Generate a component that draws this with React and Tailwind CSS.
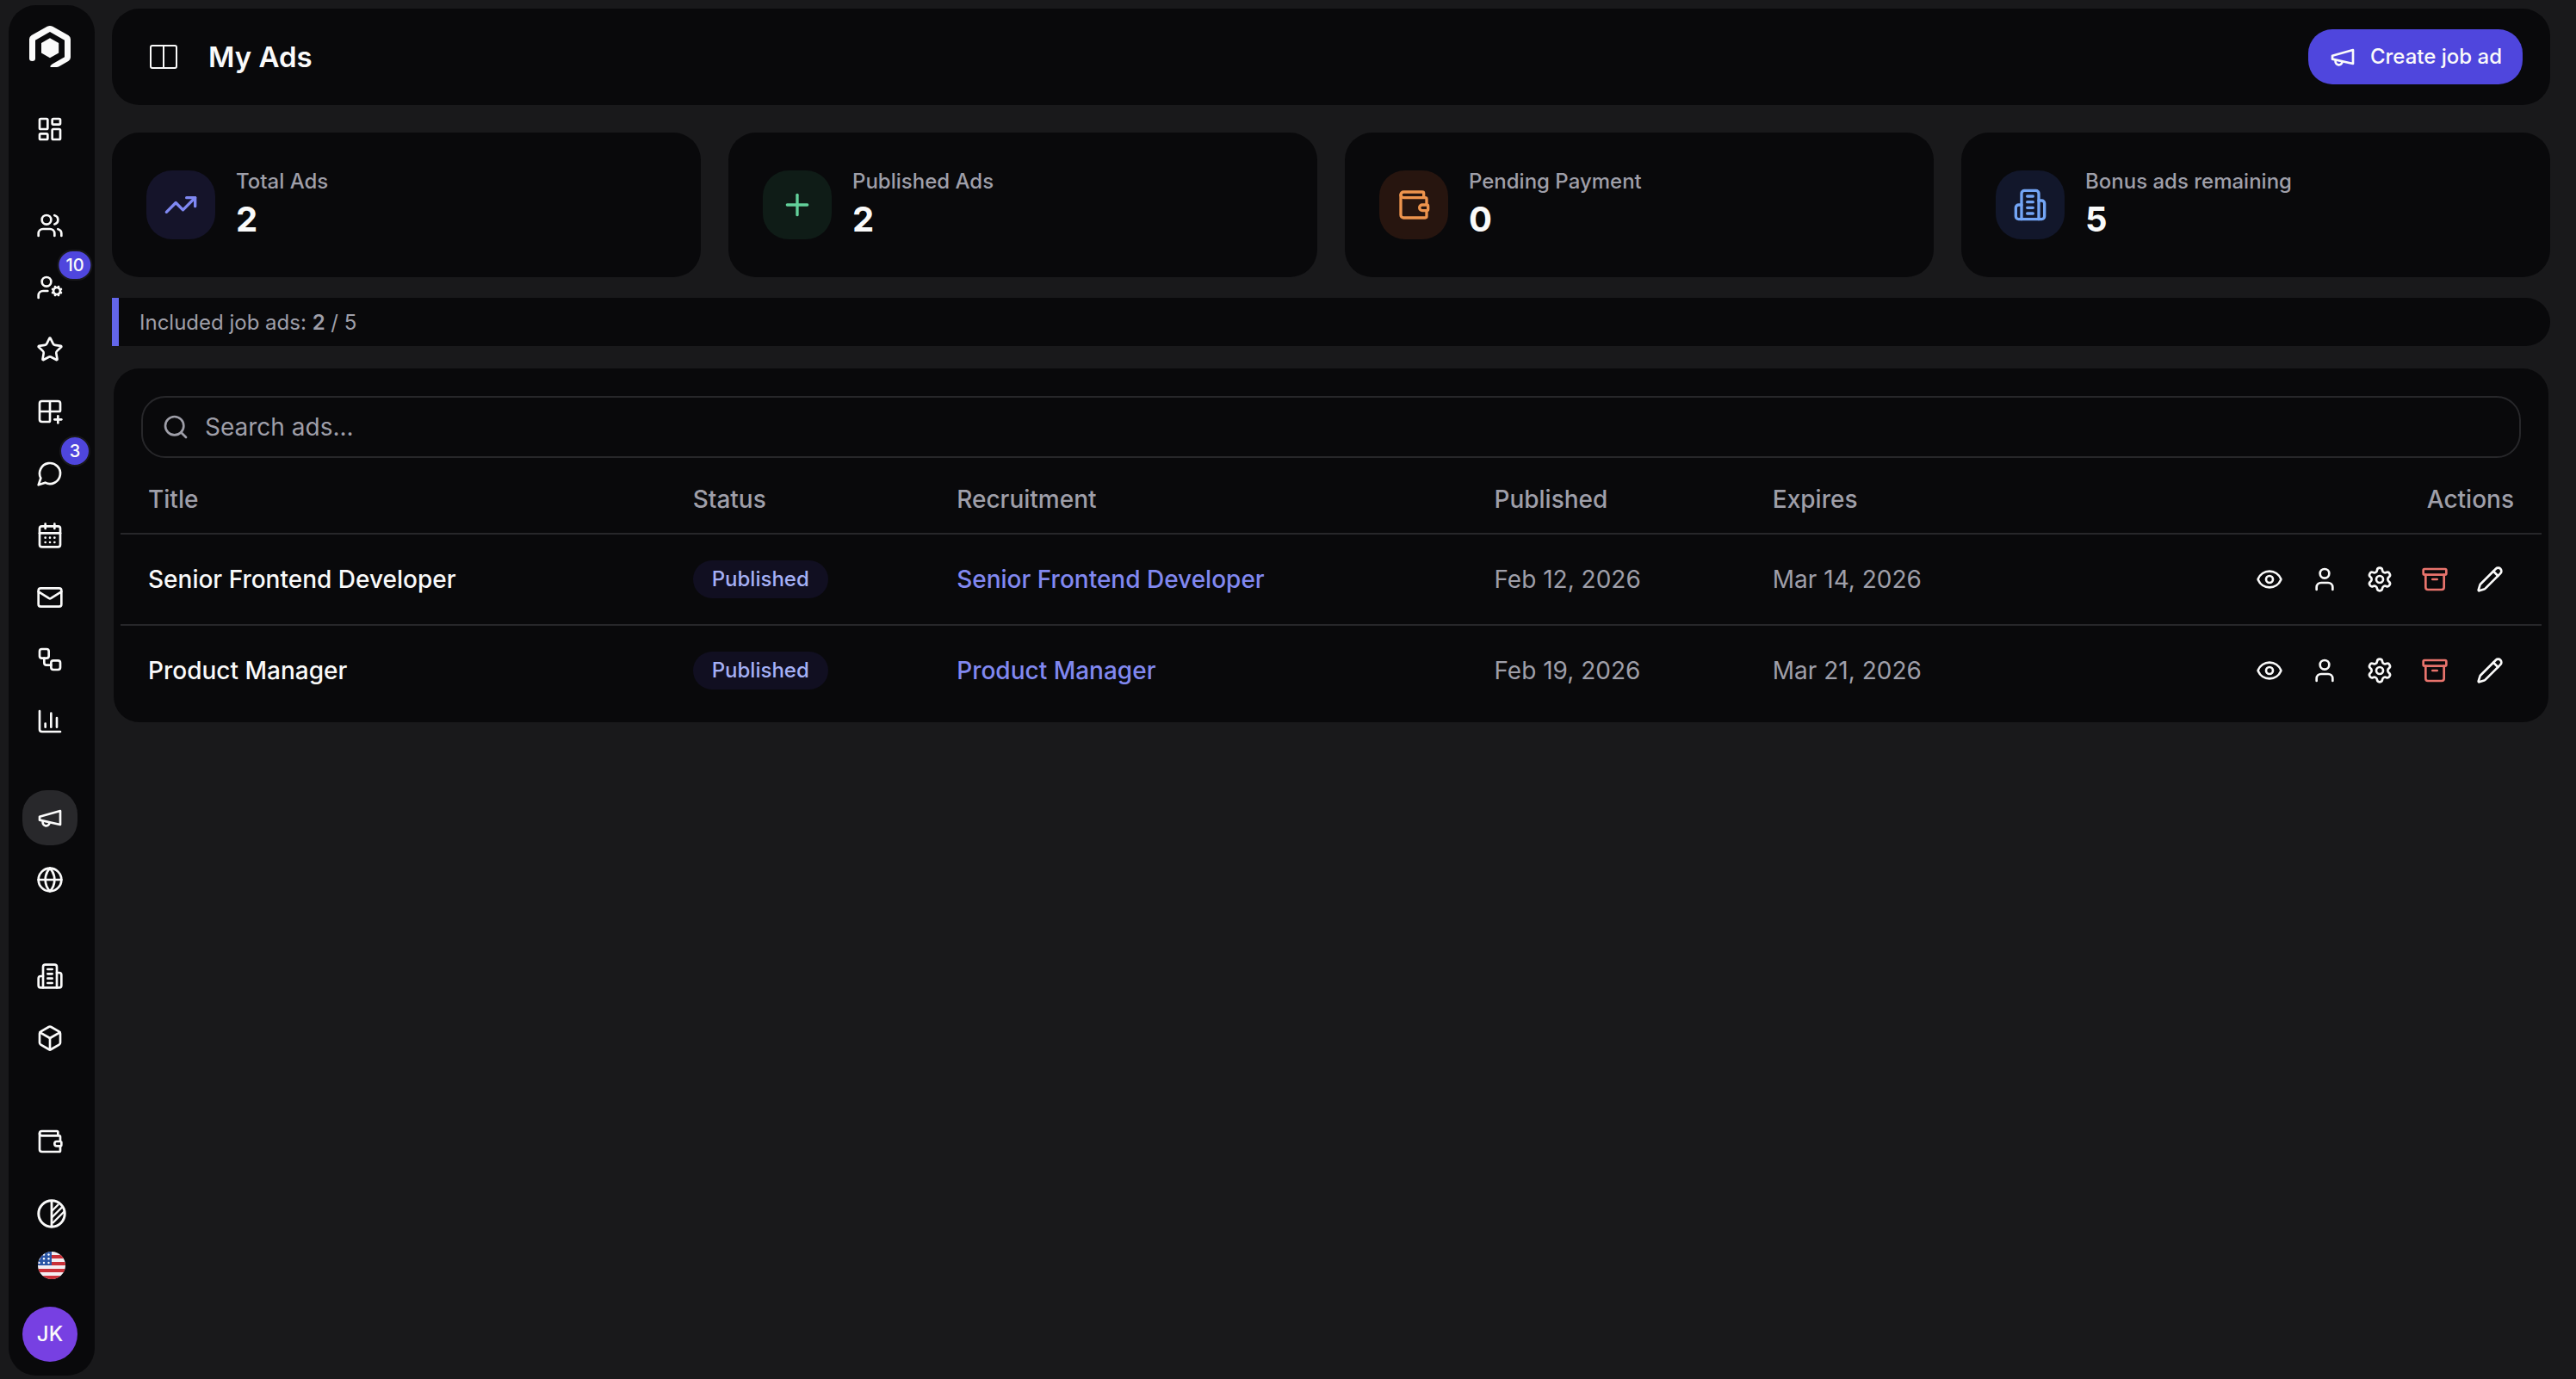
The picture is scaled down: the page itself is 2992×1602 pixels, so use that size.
import {
  Archive,
  Box,
  CalendarDays,
  ChartColumn,
  Eye,
  Globe,
  Grid2x2Plus,
  LayoutDashboard,
  Mail,
  Pencil,
  Plus,
  Search,
  Settings,
  Star,
  TrendingUp,
  User,
  UserCog,
  Users,
  Wallet,
  Workflow,
} from "lucide-react";

function StrokeIcon({ size = 32, strokeWidth = 2, className, children }) {
  return (
    <svg
      width={size}
      height={size}
      viewBox="0 0 24 24"
      fill="none"
      stroke="currentColor"
      strokeWidth={strokeWidth}
      strokeLinecap="round"
      strokeLinejoin="round"
      className={className}
      aria-hidden="true"
    >
      {children}
    </svg>
  );
}

function Megaphone(props) {
  return (
    <StrokeIcon {...props}>
      <path d="m3 11 18-5v12L3 14v-3z" />
      <path d="M11.6 16.8a3 3 0 1 1-5.8-1.6" />
    </StrokeIcon>
  );
}

function Message(props) {
  return (
    <StrokeIcon {...props}>
      <path d="M7.9 20A9 9 0 1 0 4 16.1L2 22Z" />
    </StrokeIcon>
  );
}

function Building(props) {
  return (
    <StrokeIcon {...props}>
      <path d="M6 22V4a2 2 0 0 1 2-2h8a2 2 0 0 1 2 2v18Z" />
      <path d="M6 12H4a2 2 0 0 0-2 2v6a2 2 0 0 0 2 2h2" />
      <path d="M18 9h2a2 2 0 0 1 2 2v9a2 2 0 0 1-2 2h-2" />
      <path d="M10 6h4M10 10h4M10 14h4M10 18h4" />
    </StrokeIcon>
  );
}

function Logo() {
  return (
    <svg width="48" height="48" viewBox="0 0 48 48" fill="none" aria-hidden="true">
      <path
        d="M0 38V15.5Q0 12.5 2.6 11L20.8.7Q24-.7 27.2.7L45.4 11Q48 12.5 48 15.5V36.5Q48 39.5 45.4 41L35 47Q33.500 48 31.500 48H25.200Q23.600 47.600 24.800 46.200Q25.500 45.200 27 44.300L41 36.200V16.800L24 7 7 16.800V38Q7 41 3.500 41Q0 41 0 38Z"
        fill="currentColor"
      />
      <path d="M24 14.200 34.200 20V31.500L24 37.300 14 31.500V20Z" fill="currentColor" />
    </svg>
  );
}

function PanelToggle() {
  return (
    <svg width="32" height="28" viewBox="0 0 32 28" fill="none" stroke="currentColor" strokeWidth="2" aria-hidden="true">
      <rect x="1" y="1" width="30" height="26" rx="2" />
      <path d="M16 1v26" />
    </svg>
  );
}

function ThemeIcon() {
  return (
    <svg width="34" height="34" viewBox="0 0 34 34" fill="none" stroke="currentColor" aria-hidden="true">
      <circle cx="17" cy="17" r="15.2" strokeWidth="3" />
      <path d="M17 2v30" strokeWidth="2.8" />
      <path d="M17 14 25 6M17 21.5 29 9.5M18 28 31.5 14.5" strokeWidth="2.4" />
    </svg>
  );
}

function UsFlag() {
  return (
    <svg width="32" height="32" viewBox="0 0 32 32" aria-hidden="true">
      <clipPath id="flag-round">
        <circle cx="16" cy="16" r="16" />
      </clipPath>
      <g clipPath="url(#flag-round)">
        <rect width="32" height="32" fill="#f3eef2" />
        <path d="M0 4h32v4H0zM0 12h32v4H0zM0 20h32v4H0zM0 28h32v4H0z" fill="#c93038" />
        <rect width="16" height="16" fill="#2a56a5" />
        <g fill="#ffffff">
          <circle cx="7" cy="3.5" r="1.2" />
          <circle cx="12.5" cy="3.5" r="1.2" />
          <circle cx="1.5" cy="8.2" r="1.2" />
          <circle cx="7" cy="8.2" r="1.2" />
          <circle cx="12.5" cy="8.2" r="1.2" />
          <circle cx="1.5" cy="13" r="1.2" />
          <circle cx="7" cy="13" r="1.2" />
          <circle cx="12.5" cy="13" r="1.2" />
        </g>
      </g>
    </svg>
  );
}

const navGroups = [
  [{ label: "Dashboard", icon: LayoutDashboard }],
  [
    { label: "Candidates", icon: Users },
    { label: "Recruitments", icon: UserCog, badge: 10 },
    { label: "Favorites", icon: Star },
    { label: "Boards", icon: Grid2x2Plus },
    { label: "Messages", icon: Message, badge: 3 },
    { label: "Calendar", icon: CalendarDays },
    { label: "Mail", icon: Mail },
    { label: "Workflows", icon: Workflow },
    { label: "Reports", icon: ChartColumn },
  ],
  [
    { label: "My Ads", icon: Megaphone, active: true },
    { label: "Career page", icon: Globe },
  ],
  [
    { label: "Company", icon: Building },
    { label: "Products", icon: Box },
  ],
];

const stats = [
  { label: "Total Ads", value: 2, icon: TrendingUp, tone: "bg-[#15142a] text-[#7f88f2]" },
  { label: "Published Ads", value: 2, icon: Plus, tone: "bg-[#0f1c17] text-[#63d19b]" },
  { label: "Pending Payment", value: 0, icon: Wallet, tone: "bg-[#27150f] text-[#ee944d]" },
  { label: "Bonus ads remaining", value: 5, icon: Building, tone: "bg-[#12172b] text-[#73a5f5]" },
];

const ads = [
  { title: "Senior Frontend Developer", status: "Published", published: "Feb 12, 2026", expires: "Mar 14, 2026" },
  { title: "Product Manager", status: "Published", published: "Feb 19, 2026", expires: "Mar 21, 2026" },
];

const rowActions = [
  { label: "Preview", icon: Eye },
  { label: "Candidates", icon: User },
  { label: "Settings", icon: Settings },
  { label: "Archive", icon: Archive, danger: true },
  { label: "Edit", icon: Pencil },
];

function NavItem({ label, icon: Icon, badge, active }) {
  return (
    <a
      href="#"
      aria-label={label}
      className={`relative flex size-16 items-center justify-center rounded-[28px] ${active ? "bg-[#28282b]" : ""}`}
    >
      <Icon size={32} />
      {badge && (
        <span className="absolute -top-3 left-[61px] flex h-9 min-w-9 -translate-x-1/2 items-center justify-center rounded-full border-2 border-[#19191b] bg-[#4f46dd] px-2 text-xl font-medium">
          {badge}
        </span>
      )}
    </a>
  );
}

function Sidebar() {
  return (
    <aside className="flex w-[100px] shrink-0 flex-col rounded-[32px] bg-[#09090b] px-4 pt-6 pb-4">
      <a href="#" aria-label="Home" className="flex w-16 justify-center">
        <Logo />
      </a>

      <nav className="mt-10 flex flex-col gap-12">
        {navGroups.map((group) => (
          <div key={group[0].label} className="flex flex-col gap-2">
            {group.map((item) => (
              <NavItem key={item.label} {...item} />
            ))}
          </div>
        ))}
      </nav>

      <div className="mt-auto flex flex-col">
        <NavItem label="Billing" icon={Wallet} />
        <button type="button" aria-label="Toggle theme" className="mt-[35px] flex justify-center">
          <ThemeIcon />
        </button>
        <button type="button" aria-label="Language" className="mt-[27px] flex justify-center">
          <UsFlag />
        </button>
        <button
          type="button"
          aria-label="Account"
          className="mt-8 flex size-16 items-center justify-center rounded-full bg-[#7740e2] text-2xl font-medium"
        >
          JK
        </button>
      </div>
    </aside>
  );
}

function StatCard({ label, value, icon: Icon, tone }) {
  return (
    <div className="flex h-[168px] items-center gap-6 rounded-[32px] bg-[#09090b] px-10">
      <div className={`flex size-20 items-center justify-center rounded-[30px] ${tone}`}>
        <Icon size={40} />
      </div>
      <div className="pt-0.5">
        <p className="text-2xl/8 font-medium text-[#9f9fa9]">{label}</p>
        <p className="text-[40px]/14 font-bold">{value}</p>
      </div>
    </div>
  );
}

function AdsTable() {
  return (
    <table className="w-full table-fixed text-left text-[28px]/8">
      <thead>
        <tr className="h-20 border-b-2 border-[#27272a] text-[#9f9fa9]">
          <th className="w-[22.5%] px-8 font-medium">Title</th>
          <th className="w-[10.9%] px-8 font-medium">Status</th>
          <th className="w-[22.2%] px-8 font-medium">Recruitment</th>
          <th className="w-[11.5%] px-8 font-medium">Published</th>
          <th className="w-[11.5%] px-8 font-medium">Expires</th>
          <th className="px-8 text-right font-medium">Actions</th>
        </tr>
      </thead>
      <tbody>
        {ads.map((ad) => (
          <tr key={ad.title} className="h-[106px] border-b-2 border-[#27272a] last:h-[105px] last:border-b-0">
            <td className="px-8 font-medium">{ad.title}</td>
            <td className="px-8">
              <span className="inline-flex h-11 items-center rounded-full bg-[#110f21] px-5.5 text-2xl font-medium text-[#a5b0f5]">
                {ad.status}
              </span>
            </td>
            <td className="px-8">
              <a href="#" className="font-medium text-[#8188f0]">
                {ad.title}
              </a>
            </td>
            <td className="px-8 text-[#9f9fa9]">{ad.published}</td>
            <td className="px-8 text-[#9f9fa9]">{ad.expires}</td>
            <td className="px-8">
              <div className="flex justify-end gap-2">
                {rowActions.map(({ label, icon: Icon, danger }) => (
                  <button
                    key={label}
                    type="button"
                    aria-label={`${label} ${ad.title}`}
                    className={`flex size-14 items-center justify-center ${danger ? "text-[#e8736c]" : ""}`}
                  >
                    <Icon size={32} />
                  </button>
                ))}
              </div>
            </td>
          </tr>
        ))}
      </tbody>
    </table>
  );
}

export default function App() {
  return (
    <div className="flex min-h-screen gap-5 bg-[#19191b] pt-1.5 pr-[30px] pb-1 pl-2.5 font-['Inter',sans-serif] text-[#fafafa]">
      <Sidebar />

      <main className="min-w-0 flex-1 pt-1">
        <header className="flex h-28 items-center justify-between rounded-[32px] bg-[#09090b] pr-8 pl-11">
          <div className="flex items-center gap-9">
            <button type="button" aria-label="Toggle sidebar">
              <PanelToggle />
            </button>
            <h1 className="text-[33px]/10 font-semibold">My Ads</h1>
          </div>
          <button type="button" className="flex h-16 items-center gap-4 rounded-[28px] bg-[#4f46dd] px-6 text-2xl font-medium">
            <Megaphone size={32} />
            Create job ad
          </button>
        </header>

        <section className="mt-8 grid grid-cols-4 gap-8">
          {stats.map((stat) => (
            <StatCard key={stat.label} {...stat} />
          ))}
        </section>

        <p className="mt-6 flex h-14 items-center rounded-r-[28px] border-l-8 border-[#6366ea] bg-[#09090b] px-6 pt-0.5 text-2xl whitespace-pre text-[#9f9fa9]">
          Included job ads: <span className="font-semibold">2</span> / 5
        </p>

        <section className="mx-0.5 mt-[26px] rounded-[30px] bg-[#09090b] p-2">
          <div className="px-6 pt-6 pb-2">
            <label className="flex h-[72px] items-center gap-4.5 rounded-[28px] border-2 border-[#27272a] px-5.5 text-[#9f9fa9]">
              <Search size={32} />
              <input
                type="search"
                aria-label="Search ads"
                placeholder="Search ads..."
                className="min-w-0 flex-1 bg-transparent text-[28px] outline-none placeholder:text-[#9f9fa9]"
              />
            </label>
          </div>
          <AdsTable />
        </section>
      </main>
    </div>
  );
}
